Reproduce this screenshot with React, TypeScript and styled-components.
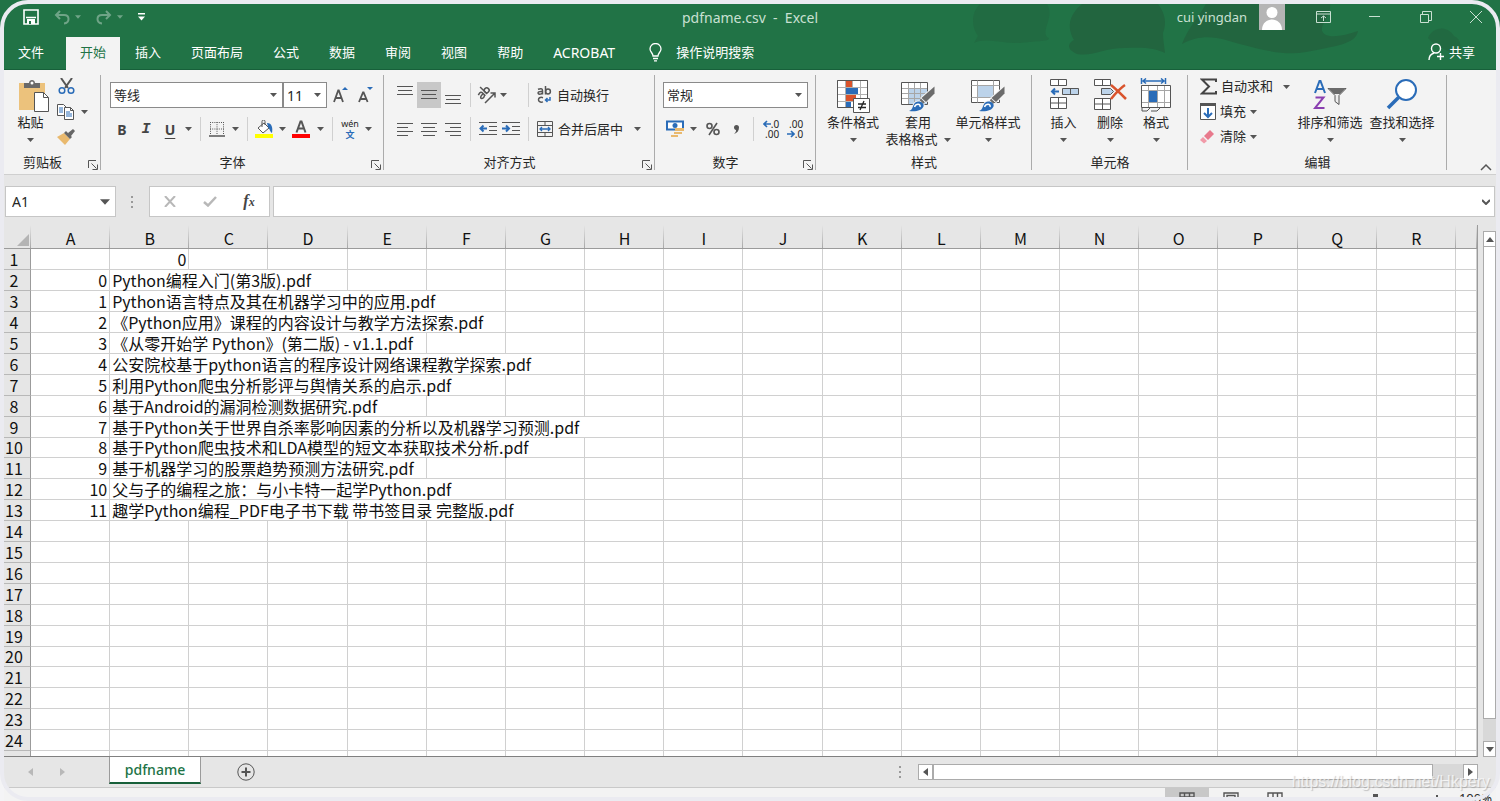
import React from 'react';
import styled, { createGlobalStyle, css } from 'styled-components';

const green = '#217346';
const ink = '#262626';
const grey = '#555555';
const blue = '#2a6cb8';
const face = '#f3f3f3';
const chrome = '#e6e6e6';

const GlobalStyle = createGlobalStyle`
  * { box-sizing: border-box; }
  body {
    margin: 0;
    font: 13px/17px "Noto Sans", "Noto Sans CJK SC", sans-serif;
    color: ${ink};
  }
  button, select, input { font: inherit; color: inherit; margin: 0; }
  svg { display: block; flex: none; }
`;

const Frame = styled.div`
  position: relative;
  display: flex;
  flex-direction: column;
  height: 100vh;
  min-width: 1460px;
  padding: 4px 4px 0;
  overflow: hidden;
  background: linear-gradient(${green} 50%, #f4f4f6 50%);

  &::after {
    content: "";
    position: absolute;
    inset: 0;
    border: 4px solid #ebebf1;
    border-radius: 28px;
    pointer-events: none;
  }
`;

const Plain = styled.button`
  display: flex;
  align-items: center;
  justify-content: center;
  flex: none;
  padding: 0;
  border: 0;
  background: none;
  white-space: nowrap;
`;

/* Title bar and tabs */

const Banner = styled.header`
  position: relative;
  flex: none;
  background: ${green};
  border-bottom: 1px solid #17603a;
  color: #ffffff;
`;

const Clouds = styled.svg`
  position: absolute;
  top: 0;
  right: 0;
`;

const TitleBar = styled.div`
  position: relative;
  display: grid;
  grid-template-columns: 1fr auto 1fr;
  height: 33px;
  padding-bottom: 7px;
  align-items: center;
`;

const QuickAccess = styled.div`
  display: flex;
  align-items: center;
  padding-left: 19px;
  gap: 15px;
`;

const QuickPair = styled.div`
  display: flex;
  align-items: center;
  gap: 5px;
  opacity: 0.35;
`;

const Title = styled.span`
  color: #c9e0d2;
  font-size: 14px;
  white-space: pre;
`;

const WindowTools = styled.div`
  display: flex;
  align-items: center;
  justify-content: flex-end;
  color: #c9e0d2;
`;

const Avatar = styled.svg`
  margin: 0 13px 0 12px;
`;

const WindowButton = styled(Plain)<{ $last?: boolean }>`
  width: ${p => (p.$last ? 40 : 51)}px;
  height: 26px;
  ${p => p.$last && css`margin-left: 5px;`}
`;

const TabRow = styled.nav`
  position: relative;
  display: flex;
  height: 32px;
`;

const Tab = styled(Plain)<{ $active?: boolean; $file?: boolean; $latin?: boolean }>`
  padding: 0 15px 2px;
  ${p => p.$file && css`padding: 0 22px 2px 14px;`}
  ${p => p.$active && css`padding: 0 14px 2px; background: ${face}; color: ${green}; height: 33px;`}
  ${p => p.$latin && css`font-size: 14px;`}
`;

const Tell = styled(Plain)`
  gap: 14px;
  padding: 0 0 2px 19px;
`;

const Share = styled(Plain)`
  gap: 4px;
  margin-left: auto;
  padding: 0 21px 2px 0;
`;

/* Ribbon */

const Ribbon = styled.section`
  display: flex;
  flex: none;
  height: 105px;
  background: ${face};
  border-bottom: 1px solid #cfcfcf;
`;

const Group = styled.div<{ $w: number }>`
  position: relative;
  display: flex;
  flex-direction: column;
  flex: none;
  width: ${p => p.$w}px;

  &::after {
    content: "";
    position: absolute;
    right: 0;
    top: 5px;
    bottom: 4px;
    width: 1px;
    background: #ababab;
  }
`;

const GroupBody = styled.div<{ $pad?: number }>`
  display: flex;
  height: 84px;
  padding-left: ${p => p.$pad ?? 0}px;
`;

const GroupName = styled.div<{ $plain?: boolean }>`
  display: flex;
  justify-content: center;
  height: 17px;
  padding-right: ${p => (p.$plain ? 0 : 20)}px;
`;

const Launcher = styled(Plain)`
  position: absolute;
  right: 3px;
  bottom: 4px;
  width: 11px;
  height: 11px;
`;

const Stack = styled.div<{ $top?: number; $gap?: number }>`
  display: flex;
  flex-direction: column;
  padding-top: ${p => p.$top ?? 12}px;
  gap: ${p => p.$gap ?? 8}px;
`;

const Row = styled.div`
  display: flex;
  align-items: center;
  height: 26px;
`;

const Tool = styled(Plain)<{ $w?: number; $on?: boolean; $h?: number }>`
  width: ${p => p.$w ?? 24}px;
  height: ${p => p.$h ?? 26}px;
  background: ${p => (p.$on ? '#c8c8c8' : 'none')};
`;

const Letter = styled.span<{ $kind: 'b' | 'i' | 'u' }>`
  font-size: 14px;
  font-weight: 700;
  color: #444444;
  ${p => p.$kind === 'i' && css`font-family: "Liberation Mono", monospace; font-style: italic; font-size: 15px;`}
  ${p => p.$kind === 'u' && css`text-decoration: underline; text-underline-offset: 3px;`}
`;

const Rule = styled.i<{ $before?: number }>`
  width: 1px;
  height: 24px;
  margin: 0 5px 0 ${p => p.$before ?? 5}px;
  background: #d0d0d0;
`;

const Caption = styled(Plain)<{ $gap?: number; $h?: number; $left?: number }>`
  gap: ${p => p.$gap ?? 5}px;
  height: ${p => p.$h ?? 26}px;
  margin-left: ${p => p.$left ?? 0}px;
  justify-content: flex-start;
`;

const Big = styled(Plain)<{ $w: number }>`
  flex-direction: column;
  justify-content: flex-start;
  width: ${p => p.$w}px;
  padding-top: 8px;
`;

const BigIcon = styled.span`
  display: flex;
  align-items: center;
  height: 36px;
`;

const BigLine = styled.span`
  display: flex;
  align-items: center;
  gap: 6px;
  height: 17px;
`;

const Picker = styled.label<{ $w: number; $h?: number; $tone?: string }>`
  display: grid;
  align-items: center;
  flex: none;
  width: ${p => p.$w}px;
  height: ${p => p.$h ?? 26}px;
  border: 1px solid ${p => p.$tone ?? '#8a8a8a'};
  background: #ffffff;

  > * { grid-area: 1 / 1; }
  > svg { justify-self: end; margin-right: 5px; pointer-events: none; }
`;

const Select = styled.select<{ $size?: number; $pad?: number }>`
  appearance: none;
  width: 100%;
  height: 100%;
  padding: 0 0 0 ${p => p.$pad ?? 3}px;
  border: 0;
  background: none;
  font-size: ${p => p.$size ?? 13}px;
`;

const Collapse = styled(Plain)`
  align-self: flex-end;
  margin: 0 4px 3px auto;
`;

/* Formula bar */

const FormulaBar = styled.div`
  display: flex;
  flex: none;
  align-items: flex-start;
  padding: 11px 1px 0;
  height: 50px;
  background: ${chrome};
`;

const Dots = styled.svg`
  margin: 9px 15px 0 14px;
`;

const FormulaButtons = styled.div`
  display: flex;
  width: 121px;
  height: 31px;
  margin-right: 3px;
  border: 1px solid #c6c6c6;
  background: #ffffff;
`;

const FormulaField = styled.div`
  display: flex;
  flex: 1;
  height: 31px;
  padding-right: 4px;
  border: 1px solid #c6c6c6;
  background: #ffffff;
`;

const FormulaInput = styled.input`
  flex: 1;
  border: 0;
  background: none;
`;

const Fx = styled.span`
  font: italic 700 16px/20px "Liberation Serif", serif;
  color: #444444;

  small { font-size: 12px; }
`;

/* Sheet */

const Workspace = styled.main`
  display: flex;
  flex: 1;
  min-height: 0;
  background: ${chrome};
`;

const SheetArea = styled.div`
  flex: 1;
  min-width: 0;
  overflow: hidden;
  border-right: 1px solid #9b9b9b;
  border-bottom: 1px solid #808080;
  background: #ffffff;
`;

const Sheet = styled.table`
  width: 100%;
  table-layout: fixed;
  border-collapse: separate;
  border-spacing: 0;
  font: 16px/20px "Noto Sans CJK SC", sans-serif;
  color: #111111;
`;

const HeadCol = styled.col`width: 27px;`;
const TailCol = styled.col`width: 21px;`;

const ColHead = styled.th`
  height: 24px;
  padding: 3px 0 0;
  border-bottom: 1px solid #9b9b9b;
  background: linear-gradient(${chrome}, #a8a8a8) right / 1px 100% no-repeat ${chrome};
  font-weight: 400;
`;

const Corner = styled(ColHead)`
  > svg { margin: 3px 0 0 auto; }
`;

const RowHead = styled.th`
  padding: 0 6px 0 0;
  border-right: 1px solid #9b9b9b;
  border-bottom: 1px solid #b8b8b8;
  background: ${chrome};
  font-weight: 400;
`;

const Line = styled.tr`
  height: 21px;
  &:nth-child(10n) { height: 20px; }
  &:nth-child(10n) > * { line-height: 19px; }
`;

const Cell = styled.td<{ $num?: boolean }>`
  padding: 0 2px;
  border-right: 1px solid #d0d0d0;
  border-bottom: 1px solid #d0d0d0;
  white-space: nowrap;
  text-align: ${p => (p.$num ? 'right' : 'left')};
`;

const VScroll = styled.div`
  display: flex;
  flex-direction: column;
  flex: none;
  width: 13px;
  margin: 6px 0 0 5px;
  background: #d8d8d8;
`;

const ScrollButton = styled(Plain)`
  width: 15px;
  height: 16px;
  border: 1px solid #ababab;
  background: #ffffff;
`;

const VButton = styled(ScrollButton)`
  width: 13px;
`;

const VThumb = styled.div`
  flex: 1;
  margin-bottom: 22px;
  border: 1px solid #ababab;
  border-top: 0;
  background: #ffffff;
`;

const BottomBar = styled.div`
  display: flex;
  flex: none;
  height: 30px;
  background: ${chrome};
`;

const SheetNav = styled.div`
  display: flex;
  align-items: center;
  gap: 27px;
  width: 105px;
  padding-left: 24px;
`;

const SheetTab = styled(Plain)`
  width: 92px;
  height: 27px;
  border: 1px solid #9b9b9b;
  border-top: 0;
  border-bottom: 2px solid #17603a;
  background: #ffffff;
  color: ${green};
  font-weight: 500;
  font-size: 14px;
`;

const AddSheet = styled(Plain)`
  margin-left: 36px;
`;

const HScroll = styled.div`
  display: flex;
  align-items: center;
  width: 40%;
  margin-left: auto;
  padding-right: 18px;
`;

const HTrack = styled.div`
  flex: 1;
  height: 16px;
  padding-right: 30px;
  background: #d8d8d8;
`;

const HThumb = styled.div`
  height: 16px;
  border: 1px solid #ababab;
  background: #ffffff;
`;

const HDots = styled.svg`
  margin-right: 16px;
`;

const StatusBar = styled.footer`
  display: flex;
  flex: none;
  justify-content: flex-end;
  align-items: flex-start;
  height: 14px;
  overflow: hidden;
  border-top: 1px solid #c9c9c9;
  background: ${face};
`;

const ViewButton = styled(Plain)<{ $on?: boolean }>`
  width: 44px;
  height: 14px;
  padding-top: 4px;
  align-items: flex-start;
  background: ${p => (p.$on ? '#c8c8c8' : 'none')};
`;

const ZoomSlider = styled.svg`
  margin: 6px 14px 0 76px;
`;

const ZoomLevel = styled.span`
  flex: none;
  padding-top: 2px;
  margin-right: 4px;
`;

const Watermark = styled.span`
  position: absolute;
  right: 10px;
  bottom: 9px;
  font: 16px/20px "Liberation Sans", sans-serif;
  color: rgba(255, 255, 255, 0.7);
  text-shadow: 1px 1px 1px rgba(120, 120, 120, 0.4);
`;

/* Icons */

const Arrow = ({ wide }: { wide?: boolean }) => (
  <svg width={wide ? 10 : 7} height={wide ? 6 : 4} viewBox="0 0 7 4" fill={grey}><path d="M0 0h7L3.5 4z" /></svg>
);

const LaunchIcon = () => (
  <svg width="10" height="10" viewBox="0 0 10 10" fill="none" stroke={grey}><path d="M.5 8V.5H8M3.500 3.500l5 5M9.500 4.500v5h-5" /></svg>
);

const SaveIcon = () => (
  <svg width="16" height="16" viewBox="0 0 16 16" fill="none" stroke="#fff" strokeWidth="1.600"><path d="M1 1h14v14H1zM3 8.500h10" /><path d="M4 10h8v5H4z" fill="#fff" stroke="none" /><path d="M6 12h2v3H6z" fill={green} stroke="none" /></svg>
);

const UndoIcon = ({ flip }: { flip?: boolean }) => (
  <svg width="16" height="15" viewBox="0 0 16 15" fill="none" stroke="#fff" strokeWidth="2">
    {flip ? <path d="M10 1l4 4-4 4M14 5H6C0 5 0 13 6 13.500" /> : <path d="M6 1L2 5l4 4M2 5h8c6 0 6 8 0 8.500" />}
  </svg>
);

const PasteIcon = () => (
  <svg width="38" height="34" viewBox="-6 0 38 34">
    <path d="M1 4h26v27H1z" fill="#ecc27c" />
    <path d="M6 9V4h5c0-4 6-4 6 0h5v5z" fill="#696969" /><circle cx="14" cy="4" r="1.500" fill="#fff" />
    <path d="M16.500 13.500h9l5 5v14h-14z" fill="#fff" stroke={grey} /><path d="M25.500 13.500v5h5" fill="none" stroke={grey} />
  </svg>
);

const CutIcon = () => (
  <svg width="17" height="17" viewBox="0 0 17 17" fill="none"><path d="M3 0l7 10M14 0L7 10" stroke={grey} strokeWidth="2" /><circle cx="4" cy="12.500" r="2.800" stroke={blue} strokeWidth="1.500" /><circle cx="13" cy="12.500" r="2.800" stroke={blue} strokeWidth="1.500" /></svg>
);

const CopyIcon = () => (
  <svg width="18" height="16" viewBox="0 0 18 16" fill="#fff" stroke={grey}><path d="M.5.5h6l3 3v8h-9z" /><path d="M7.500 3.500h6l3 3v9h-9z" /><path d="M13.500 3.500v3h3" fill="none" /><path d="M2 4h4M2 6h4M2 8h4M9 8h4M9 10h6M9 12h6" stroke={blue} /></svg>
);

const PainterIcon = () => (
  <svg width="18" height="16" viewBox="0 0 18 16"><path d="M7 4l6 6-5 6-8-8z" fill="#e9b96e" /><path d="M7 4l2-2 6 6-2 2zM11 4l5-4 2 2-4 5z" fill="#666" /></svg>
);

const GrowIcon = ({ down }: { down?: boolean }) => (
  <svg width="18" height="20" viewBox="0 0 18 20" fill="none">
    {down
      ? <><path d="M3 17L7 7.500h.6l4 9.500M4.500 14h6" stroke={grey} strokeWidth="1.800" /><path d="M11 2h6l-3 3z" fill={blue} /></>
      : <><path d="M3 17L7.200 5.500h.6l4.200 11.500M4.500 13h6" stroke={grey} strokeWidth="1.800" /><path d="M11 5h6l-3-3z" fill={blue} /></>}
  </svg>
);

const BorderIcon = () => (
  <svg width="16" height="16" viewBox="0 0 16 16" fill="none" stroke={grey}><path d="M1 1.500h14M1.500 1v13M14.500 1v13M8 1v13M1 8h14" strokeDasharray="1 1.200" /><path d="M0 15h16" strokeWidth="1.500" /></svg>
);

const FillIcon = () => (
  <svg width="18" height="18" viewBox="0 0 18 18"><path d="M3 8l6-5 5 5-6 5z" fill="#fff" stroke={grey} /><path d="M7 7V1.500a1.500 1.500 0 013 0V5" fill="none" stroke={grey} /><path d="M12 3c5 0 6 5 5 10-2-1-2-4-4-6z" fill={blue} /><path d="M0 14h18v4H0z" fill="#ffff00" /></svg>
);

const FontColorIcon = () => (
  <svg width="18" height="18" viewBox="0 0 18 18" fill="none"><path d="M4.500 12.500L8.500 1.500h1l4 11M6 8.500h6" stroke={grey} strokeWidth="2" /><path d="M0 14h18v4H0z" fill="#ff0000" /></svg>
);

const Phonetic = styled.span`
  display: flex;
  flex-direction: column;
  align-items: center;
  font-size: 9px;
  line-height: 11px;

  b { color: ${blue}; font-size: 9px; }
`;

const linesAt = (rows: number[][], w = 17, h = 26) => (
  <svg width={w} height={h} viewBox={`0 0 ${w} ${h}`} stroke={grey}>
    {rows.map(([x, y, l], i) => <path key={i} d={`M${x} ${y}.5h${l}`} />)}
  </svg>
);

const OrientIcon = () => (
  <svg width="20" height="18" viewBox="0 0 20 18" fill="none" stroke={grey} strokeWidth="1.500">
    <g transform="rotate(-45 7 7)"><path d="M1.500 4.500c4-1.500 4.500 0 4.500 1.500v4M6 7C2 6.500.5 8 1.500 9.300S5 10 6 8.500" /><path d="M8.500 0v10" /><circle cx="10.800" cy="7" r="2.400" /></g>
    <path d="M8 17L17.500 7.500M13.500 7h4.500v4.500" />
  </svg>
);

const IndentIcon = ({ right }: { right?: boolean }) => (
  <svg width="19" height="16" viewBox="0 0 19 16" fill="none" stroke={grey}><path d="M0 1.500h18M10 5.500h8M10 9.500h8M0 13.500h18" /><path d={right ? 'M0 7.500h7M4 4.500l3 3-3 3' : 'M8 7.500H2M4.500 4.500l-3 3 3 3'} stroke={blue} strokeWidth="2" /></svg>
);

const WrapIcon = () => (
  <svg width="15" height="18" viewBox="0 0 15 18" fill="none" stroke={grey} strokeWidth="1.500">
    <path d="M1 3.300c4-1.500 4.500 0 4.500 1.500v3.700M5.500 5.500C2 5.200.5 6.200 1.300 7.500S4.700 8 5.500 7M8.500 0v8.500" /><circle cx="11" cy="5.500" r="2.400" />
    <path d="M6 11.700c-6-2-6 6 0 4.200" /><path d="M13 11v3H9M10.500 12L8.500 14l2 2" stroke={blue} />
  </svg>
);

const MergeIcon = () => (
  <svg width="16" height="16" viewBox="0 0 16 16" fill="none" stroke={grey}><path d="M.5.5h15v15H.5zM0 4.500h16M0 11.500h16M8 0v4M8 12v4" /><path d="M3 8h10M5 6L3 8l2 2M11 6l2 2-2 2" stroke={blue} strokeWidth="1.300" /></svg>
);

const CurrencyIcon = () => (
  <svg width="18" height="18" viewBox="0 0 18 18"><path d="M1 1.500h16v8H1z" fill="#fff" stroke={blue} strokeWidth="2" /><circle cx="9" cy="5.500" r="2.500" fill={blue} /><path d="M9 8h9v3H9zM8 12h8v2H8zM5 15h7v2H5z" fill="#e9b96e" /></svg>
);

const Decimal = styled.span`
  display: flex;
  flex-direction: column;
  align-items: flex-end;
  font: 10px/10px "Noto Sans", sans-serif;

  span { display: flex; align-items: center; }
`;

const BlueArrow = ({ right }: { right?: boolean }) => (
  <svg width="8" height="8" viewBox="0 0 8 8" fill="none" stroke={blue} strokeWidth="1.600"><path d={right ? 'M0 4h7M4 1l3 3-3 3' : 'M8 4H1M4 1L1 4l3 3'} /></svg>
);

const CondIcon = () => (
  <svg width="34" height="34" viewBox="0 0 34 34" stroke="#8c8c8c" fill="none">
    <path d="M1.500 1.500h30v27h-30z" fill="#fff" />
    <g stroke="none"><path d="M10 2h6v6h-6zM10 16h10v6H10z" fill="#d9532c" /><path d="M10 9h12v6H10zM10 22h5v6h-5z" fill={blue} /></g>
    <path d="M1.500 8.500h30M1.500 15.500h30M1.500 22.500h30M9.500 1.500v27M16.500 1.500v7M24.500 1.500v27" stroke="#b0b0b0" /><path d="M1.500 1.500h30v27h-30z" stroke={grey} />
    <path d="M17.500 19.500h16v14h-16z" fill="#fff" stroke={grey} /><path d="M22 25h8M22 28.500h8M28 22l-4 9" stroke={ink} strokeWidth="1.300" />
  </svg>
);

const Brush = () => (
  <>
    <path d="M33.500 7.500v7L25 23l-4.500-4z" fill="#6b6b6b" stroke={face} strokeWidth="2" paintOrder="stroke" />
    <path d="M8 32c5-1 3-9 9-9.500 3.500-.3 6.500 2 5.500 5C21 31.500 15 33 8 32z" fill={blue} stroke={face} strokeWidth="2" paintOrder="stroke" />
    <path d="M13.500 28c1.500-4 6.500-3.500 5.500 0" stroke="#fff" strokeWidth="1.500" fill="none" />
    <path d="M19.500 20.500l3.500 3.500" stroke="#6b6b6b" strokeWidth="2" />
  </>
);

const TableStyleIcon = () => (
  <svg width="34" height="34" viewBox="0 0 34 34" fill="none">
    <path d="M.5 3.500h26v22H.5z" fill="#fff" /><path d="M8 9h18v16H8z" fill="#bcd3ea" />
    <path d="M.5 9.500h26M.5 14.500h26M.5 19.500h26M7.500 3.500v22M13.500 3.500v22M19.500 3.500v22" stroke="#a6a6a6" /><path d="M.5 3.500h26v22H.5z" stroke={grey} />
    <Brush />
  </svg>
);

const CellStyleIcon = () => (
  <svg width="34" height="34" viewBox="0 0 34 34" fill="none">
    <path d="M.5 1.500h28v22H.5z" fill="#fff" stroke={grey} /><path d="M.5 6.500h28M.5 18.500h28M6.500 1.500v22M22.500 1.500v22" stroke="#a6a6a6" /><path d="M7 7h15v11H7z" fill="#bcd3ea" />
    <Brush />
  </svg>
);

const InsertIcon = () => (
  <svg width="30" height="34" viewBox="0 0 30 34" fill="#fff" stroke={grey}><path d="M1.500.5h16v6h-16zM9.500.5v6M1.500 18.500h16v11h-16zM9.500 18.500v11M1.500 24h16" /><path d="M13.500 9.500h16v6h-16zM21.500 9.500v6" fill="#bcd3ea" /><path d="M10 12.500H3M6 9.500l-3 3 3 3" stroke={blue} strokeWidth="2" fill="none" /></svg>
);

const DeleteIcon = () => (
  <svg width="34" height="34" viewBox="0 0 34 34" fill="#fff" stroke={grey}><path d="M1.500.5h16v6h-16zM9.500.5v6M1.500 19.500h16v11h-16zM9.500 19.500v11M1.500 25h16" /><path d="M8.500 9.500h9l3 3-3 3h-9z" fill="#bcd3ea" /><path d="M18 6c5 4 10 9 15 14M32 6c-6 4-10 9-14 14" stroke="#d9532c" strokeWidth="2.500" fill="none" /></svg>
);

const FormatIcon = () => (
  <svg width="32" height="36" viewBox="0 0 32 36" fill="none"><path d="M1.500 0v6M25.500 0v6M3 3h21M6 .5L3 3l3 2.500M21 .5L24 3l-3 2.500" stroke={blue} strokeWidth="1.500" /><path d="M1.500 7.500h29v22h-29z" fill="#fff" /><path d="M1.500 12.500h29M1.500 24.500h29M8.500 7.500v22M17.500 7.500v22M24.500 7.500v22" stroke="#a6a6a6" /><path d="M9 13h8v11H9z" fill={blue} /><path d="M1.500 7.500h29v22h-29zM2 30v3h5l3-3M11 33h6l3-3" stroke={grey} /></svg>
);

const SumIcon = () => (
  <svg width="17" height="17" viewBox="0 0 17 17" fill="none" stroke="#444" strokeWidth="2"><path d="M16 4V1.500H2L9 8.500 2 15.500h14V13" /></svg>
);

const FillDownIcon = () => (
  <svg width="16" height="17" viewBox="0 0 16 17" fill="#fff" stroke={grey}><path d="M.5.5h15v16H.5z" /><path d="M0 1.500h16" strokeWidth="3" /><path d="M8 5v9M4 10l4 4 4-4" stroke={blue} strokeWidth="2" fill="none" /></svg>
);

const EraserIcon = () => (
  <svg width="16" height="14" viewBox="0 0 16 14"><path d="M10 0l4 4-6 6-4-4z" fill="#e8798c" /><path d="M3 7l4 4-3 2.500L0 10z" fill="#f19aa8" /></svg>
);

const SortIcon = () => (
  <svg width="34" height="34" viewBox="0 0 34 34" fill="none"><path d="M2 14L6.500 2h1L12 14M3.500 10h7" stroke={blue} strokeWidth="2" /><path d="M2.500 18.500h8L2 29h9.500" stroke="#8a3fb0" strokeWidth="2" /><path d="M15 9.500h18l-7 7v9l-4-3v-6z" fill="#eee" stroke={grey} /><path d="M15 9h18l-6 6h-6z" fill="#6b6b6b" /></svg>
);

const FindIcon = () => (
  <svg width="32" height="34" viewBox="0 0 32 34" fill="none" stroke={blue}><circle cx="20" cy="11" r="10" fill="#fff" strokeWidth="2" /><path d="M12.500 18.500L2 29" strokeWidth="3.500" /></svg>
);

/* Data */

const tabs = ['插入', '页面布局', '公式', '数据', '审阅', '视图', '帮助', 'ACROBAT'];
const columns = 'ABCDEFGHIJKLMNOPQR'.split('');

const files: { name: string; span: number }[] = [
  { name: 'Python编程入门(第3版).pdf', span: 3 },
  { name: 'Python语言特点及其在机器学习中的应用.pdf', span: 5 },
  { name: '《Python应用》课程的内容设计与教学方法探索.pdf', span: 5 },
  { name: '《从零开始学 Python》(第二版) - v1.1.pdf', span: 4 },
  { name: '公安院校基于python语言的程序设计网络课程教学探索.pdf', span: 6 },
  { name: '利用Python爬虫分析影评与舆情关系的启示.pdf', span: 5 },
  { name: '基于Android的漏洞检测数据研究.pdf', span: 4 },
  { name: '基于Python关于世界自杀率影响因素的分析以及机器学习预测.pdf', span: 7 },
  { name: '基于Python爬虫技术和LDA模型的短文本获取技术分析.pdf', span: 6 },
  { name: '基于机器学习的股票趋势预测方法研究.pdf', span: 4 },
  { name: '父与子的编程之旅：与小卡特一起学Python.pdf', span: 5 },
  { name: '趣学Python编程_PDF电子书下载 带书签目录 完整版.pdf', span: 6 },
];

const SheetRow = ({ n }: { n: number }) => {
  const file = files[n - 2];
  const used = file ? file.span + 1 : n === 1 ? 2 : 0;
  return (
    <Line>
      <RowHead scope="row">{n}</RowHead>
      {n === 1 && <><Cell /><Cell $num>0</Cell></>}
      {file && <><Cell $num>{n - 2}</Cell><Cell colSpan={file.span}>{file.name}</Cell></>}
      {Array.from({ length: columns.length + 1 - used }, (_, i) => <Cell key={i} />)}
    </Line>
  );
};

const BigButton = ({ w, icon, label, second }: { w: number; icon: React.ReactNode; label: string; second?: string }) => (
  <Big $w={w}>
    <BigIcon>{icon}</BigIcon>
    <BigLine>{label}</BigLine>
    <BigLine>{second}<Arrow /></BigLine>
  </Big>
);

const Drop = ({ label, w = 13 }: { label: string; w?: number }) => <Tool $w={w} aria-label={label}><Arrow /></Tool>;

export default function App() {
  return (
    <>
      <GlobalStyle />
      <Frame>
        <Banner>
          <Clouds width="530" height="60" viewBox="0 0 530 60" fill="#22653f" aria-hidden="true">
            <path d="M14 0C4 10 6 24 12 32L8 39c12-6 30 1 45 0 18-2 36-2 28-6-6-8 8-20 0-33z" opacity=".6" />
            <path d="M116 0c-12 10-16 22-8 36-6 3-8 9 3 14 16 3 26-6 48-6 20-1 30 0 40 5-1-8-2-14-2-20 4-10 2-20-5-29z" />
            <path d="M240 0c-8 14-18 24-24 40 16-8 28-8 44-4 34 10 58 16 80 12 30-6 50-8 52-21-12 4-24 7-32 4-12-7 6-16 4-31z" />
            <path d="M462 34c4-10 18-14 26-2 8 3 8 14 4 22-10-10-20-8-30-20z" opacity=".7" />
          </Clouds>
          <TitleBar>
            <QuickAccess>
              <Plain aria-label="保存"><SaveIcon /></Plain>
              <QuickPair>
                <Plain aria-label="撤消"><UndoIcon /></Plain>
                <svg width="6" height="4" viewBox="0 0 7 4" fill="#fff"><path d="M0 0h7L3.500 4z" /></svg>
              </QuickPair>
              <QuickPair>
                <Plain aria-label="恢复"><UndoIcon flip /></Plain>
                <svg width="6" height="4" viewBox="0 0 7 4" fill="#fff"><path d="M0 0h7L3.500 4z" /></svg>
              </QuickPair>
              <Plain aria-label="自定义快速访问工具栏"><svg width="7" height="8" viewBox="0 0 7 8" fill="#fff"><path d="M0 0h7v1.500H0zM0 3.500h7L3.500 7.500z" /></svg></Plain>
            </QuickAccess>
            <Title>{'pdfname.csv  -  Excel'}</Title>
            <WindowTools>
              <span>cui yingdan</span>
              <Avatar width="26" height="26" viewBox="0 0 26 26"><path d="M0 0h26v26H0z" fill="#b5b5b5" /><circle cx="13" cy="8.500" r="5.500" fill="#fff" /><path d="M3 26c0-14 20-14 20 0z" fill="#fff" /></Avatar>
              <WindowButton aria-label="功能区显示选项"><svg width="15" height="12" viewBox="0 0 15 12" fill="none" stroke="currentColor"><path d="M.5.5h14v11H.5zM0 3h15M7.500 10V5M5 7l2.500-2L10 7" /></svg></WindowButton>
              <WindowButton aria-label="最小化"><svg width="11" height="2" fill="currentColor"><path d="M0 0h11v1H0z" /></svg></WindowButton>
              <WindowButton aria-label="还原"><svg width="12" height="12" viewBox="0 0 12 12" fill="none" stroke="currentColor"><path d="M.5 3.500h8v8h-8zM2.500 3V.5h9v9H9" /></svg></WindowButton>
              <WindowButton $last aria-label="关闭"><svg width="12" height="12" viewBox="0 0 12 12" stroke="currentColor"><path d="M0 0l12 12M12 0L0 12" /></svg></WindowButton>
            </WindowTools>
          </TitleBar>
          <TabRow>
            <Tab $file>文件</Tab>
            <Tab $active>开始</Tab>
            {tabs.map(t => <Tab key={t} $latin={t === 'ACROBAT'}>{t}</Tab>)}
            <Tell>
              <svg width="13" height="19" viewBox="0 0 13 19" fill="none" stroke="#fff" strokeWidth="1.300"><path d="M4 13c0-3-3-4-3-7a5.500 5.500 0 0111 0c0 3-3 4-3 7zM4 15.500h5M5 17.800h3" /></svg>
              操作说明搜索
            </Tell>
            <Share>
              <svg width="17" height="18" viewBox="0 0 17 18" fill="none" stroke="#fff" strokeWidth="1.400"><circle cx="8" cy="5.500" r="4.500" /><path d="M1 17c0-4 2-6 5-7M12.500 10v7M9 13.500h7" /></svg>
              共享
            </Share>
          </TabRow>
        </Banner>

        <Ribbon>
          <Group $w={97}>
            <GroupBody>
              <BigButton w={53} icon={<PasteIcon />} label="粘贴" />
              <Stack $top={4} $gap={0}>
                <Tool $w={18} $h={25} aria-label="剪切"><CutIcon /></Tool>
                <Caption $gap={6} $h={25} aria-label="复制"><CopyIcon /><Arrow /></Caption>
                <Tool $w={18} $h={25} aria-label="格式刷"><PainterIcon /></Tool>
              </Stack>
            </GroupBody>
            <GroupName>剪贴板</GroupName>
            <Launcher aria-label="剪贴板设置"><LaunchIcon /></Launcher>
          </Group>

          <Group $w={283}>
            <GroupBody $pad={9}>
              <Stack>
                <Row>
                  <Picker $w={173}><Select aria-label="字体"><option>等线</option></Select><Arrow /></Picker>
                  <Picker $w={44}><Select aria-label="字号" $size={14}><option>11</option></Select><Arrow /></Picker>
                  <Tool $w={26} aria-label="增大字号"><GrowIcon /></Tool>
                  <Tool aria-label="减小字号"><GrowIcon down /></Tool>
                </Row>
                <Row>
                  <Tool aria-label="加粗"><Letter $kind="b">B</Letter></Tool>
                  <Tool aria-label="倾斜"><Letter $kind="i">I</Letter></Tool>
                  <Tool aria-label="下划线"><Letter $kind="u">U</Letter></Tool>
                  <Drop label="下划线样式" />
                  <Rule />
                  <Tool $w={22} aria-label="边框"><BorderIcon /></Tool>
                  <Drop label="边框样式" w={14} />
                  <Rule />
                  <Tool $w={22} aria-label="填充颜色"><FillIcon /></Tool>
                  <Drop label="选择填充颜色" w={14} />
                  <Tool aria-label="字体颜色"><FontColorIcon /></Tool>
                  <Drop label="选择字体颜色" w={14} />
                  <Rule />
                  <Tool aria-label="拼音"><Phonetic>wén<b>文</b></Phonetic></Tool>
                  <Drop label="拼音选项" />
                </Row>
              </Stack>
            </GroupBody>
            <GroupName>字体</GroupName>
            <Launcher aria-label="字体设置"><LaunchIcon /></Launcher>
          </Group>

          <Group $w={271}>
            <GroupBody $pad={9}>
              <Stack>
                <Row>
                  <Tool aria-label="顶端对齐">{linesAt([[0, 4, 16], [1, 8, 14], [0, 12, 16]])}</Tool>
                  <Tool $on aria-label="垂直居中">{linesAt([[0, 8, 16], [1, 12, 14], [0, 16, 16]])}</Tool>
                  <Tool aria-label="底端对齐">{linesAt([[0, 13, 16], [1, 17, 14], [0, 21, 16]])}</Tool>
                  <Rule />
                  <Tool $w={22} aria-label="方向"><OrientIcon /></Tool>
                  <Drop label="方向选项" w={11} />
                  <Rule $before={19} />
                  <Caption $left={3}><WrapIcon />自动换行</Caption>
                </Row>
                <Row>
                  <Tool aria-label="左对齐">{linesAt([[0, 7, 16], [0, 11, 11], [0, 15, 16], [0, 19, 11]])}</Tool>
                  <Tool aria-label="居中">{linesAt([[0, 7, 16], [2, 11, 12], [0, 15, 16], [2, 19, 12]])}</Tool>
                  <Tool aria-label="右对齐">{linesAt([[0, 7, 16], [5, 11, 11], [0, 15, 16], [5, 19, 11]])}</Tool>
                  <Rule />
                  <Tool aria-label="减少缩进量"><IndentIcon /></Tool>
                  <Tool $w={23} aria-label="增加缩进量"><IndentIcon right /></Tool>
                  <Rule />
                  <Caption $left={3}><MergeIcon />合并后居中</Caption>
                  <Drop label="合并选项" w={29} />
                </Row>
              </Stack>
            </GroupBody>
            <GroupName>对齐方式</GroupName>
            <Launcher aria-label="对齐设置"><LaunchIcon /></Launcher>
          </Group>

          <Group $w={161}>
            <GroupBody $pad={8}>
              <Stack>
                <Picker $w={145}><Select aria-label="数字格式"><option>常规</option></Select><Arrow /></Picker>
                <Row>
                  <Tool aria-label="会计数字格式"><CurrencyIcon /></Tool>
                  <Drop label="货币选项" />
                  <Tool $w={26} aria-label="百分比样式"><svg width="14" height="14" viewBox="0 0 14 14" fill="none" stroke={grey} strokeWidth="1.600"><circle cx="3.500" cy="4" r="2.500" /><circle cx="10.500" cy="10" r="2.500" /><path d="M11 1L3 13" /></svg></Tool>
                  <Tool $w={22} aria-label="千位分隔样式"><svg width="6" height="9" viewBox="0 0 6 9" fill={grey}><path d="M0 2.500a2.500 2.500 0 015 0C5 6 3 8 0 9c2-2 2-3 2-4-1 0-2-1-2-2.500z" /></svg></Tool>
                  <Rule />
                  <Tool aria-label="增加小数位数"><Decimal><span><BlueArrow />.0</span><span>.00</span></Decimal></Tool>
                  <Tool aria-label="减少小数位数"><Decimal><span>.00</span><span><BlueArrow right />.0</span></Decimal></Tool>
                </Row>
              </Stack>
            </GroupBody>
            <GroupName>数字</GroupName>
            <Launcher aria-label="数字设置"><LaunchIcon /></Launcher>
          </Group>

          <Group $w={216}>
            <GroupBody $pad={6}>
              <BigButton w={62} icon={<CondIcon />} label="条件格式" />
              <BigButton w={68} icon={<TableStyleIcon />} label="套用" second="表格格式" />
              <BigButton w={72} icon={<CellStyleIcon />} label="单元格样式" />
            </GroupBody>
            <GroupName $plain>样式</GroupName>
          </Group>

          <Group $w={156}>
            <GroupBody $pad={8}>
              <BigButton w={47} icon={<InsertIcon />} label="插入" />
              <BigButton w={46} icon={<DeleteIcon />} label="删除" />
              <BigButton w={46} icon={<FormatIcon />} label="格式" />
            </GroupBody>
            <GroupName $plain>单元格</GroupName>
          </Group>

          <Group $w={259}>
            <GroupBody $pad={12}>
              <Stack $top={4} $gap={0}>
                <Caption $gap={4} $h={25}><SumIcon />自动求和<Drop label="求和选项" w={18} /></Caption>
                <Caption $gap={4} $h={25}><FillDownIcon />填充<Arrow /></Caption>
                <Caption $gap={4} $h={25}><EraserIcon />清除<Arrow /></Caption>
              </Stack>
              <BigButton w={70} icon={<SortIcon />} label="排序和筛选" />
              <BigButton w={74} icon={<FindIcon />} label="查找和选择" />
            </GroupBody>
            <GroupName $plain>编辑</GroupName>
          </Group>

          <Collapse aria-label="折叠功能区"><svg width="12" height="8" viewBox="0 0 12 8" fill="none" stroke={grey} strokeWidth="1.500"><path d="M1 7l5-5 5 5" /></svg></Collapse>
        </Ribbon>

        <FormulaBar>
          <Picker $w={111} $h={31} $tone="#c6c6c6"><Select aria-label="名称框" $pad={6} $size={14}><option>A1</option></Select><Arrow wide /></Picker>
          <Dots width="4" height="14" fill="#999"><path d="M1 1h2v2H1zM1 6h2v2H1zM1 11h2v2H1z" /></Dots>
          <FormulaButtons>
            <Tool $w={40} $h={29} aria-label="取消"><svg width="12" height="11" viewBox="0 0 12 11" stroke="#b8b8b8" strokeWidth="2"><path d="M1 0l10 11M11 0L1 11" /></svg></Tool>
            <Tool $w={39} $h={29} aria-label="输入"><svg width="14" height="11" viewBox="0 0 14 11" fill="none" stroke="#b8b8b8" strokeWidth="2.500"><path d="M1 6l4 3.500L13 1" /></svg></Tool>
            <Tool $w={40} $h={29} aria-label="插入函数"><Fx>f<small>x</small></Fx></Tool>
          </FormulaButtons>
          <FormulaField>
            <FormulaInput aria-label="编辑栏" />
            <Plain aria-label="展开编辑栏"><svg width="8" height="6" viewBox="0 0 8 6" fill="none" stroke={grey} strokeWidth="2"><path d="M0 1l4 4 4-4" /></svg></Plain>
          </FormulaField>
        </FormulaBar>

        <Workspace>
          <SheetArea>
            <Sheet>
              <colgroup>
                <HeadCol />
                {columns.map(c => <col key={c} />)}
                <TailCol />
              </colgroup>
              <thead>
                <tr>
                  <Corner as="td"><svg width="14" height="12" viewBox="0 0 14 12" fill="#b4b4b4"><path d="M12 0v12H0z" /></svg></Corner>
                  {columns.map(c => <ColHead key={c} scope="col">{c}</ColHead>)}
                  <ColHead as="td" />
                </tr>
              </thead>
              <tbody>
                {Array.from({ length: 25 }, (_, i) => <SheetRow key={i} n={i + 1} />)}
              </tbody>
            </Sheet>
          </SheetArea>
          <VScroll>
            <VButton aria-label="向上滚动"><svg width="8" height="5" viewBox="0 0 8 5" fill={grey}><path d="M0 5h8L4 0z" /></svg></VButton>
            <VThumb />
            <VButton aria-label="向下滚动"><svg width="8" height="5" viewBox="0 0 8 5" fill={grey}><path d="M0 0h8L4 5z" /></svg></VButton>
          </VScroll>
        </Workspace>

        <BottomBar>
          <SheetNav>
            <Plain aria-label="上一张工作表"><svg width="5" height="8" fill="#b8b8b8"><path d="M5 0v8L0 4z" /></svg></Plain>
            <Plain aria-label="下一张工作表"><svg width="5" height="8" fill="#b8b8b8"><path d="M0 0v8l5-4z" /></svg></Plain>
          </SheetNav>
          <SheetTab>pdfname</SheetTab>
          <AddSheet aria-label="新工作表"><svg width="18" height="18" viewBox="0 0 18 18" fill="none" stroke={grey}><circle cx="9" cy="9" r="8.200" /><path d="M9 4.500v9M4.500 9h9" strokeWidth="2" /></svg></AddSheet>
          <HScroll>
            <HDots width="3" height="12" fill="#999"><path d="M0 0h2v2H0zM0 5h2v2H0zM0 10h2v2H0z" /></HDots>
            <ScrollButton aria-label="向左滚动"><svg width="5" height="8" fill={grey}><path d="M5 0v8L0 4z" /></svg></ScrollButton>
            <HTrack><HThumb /></HTrack>
            <ScrollButton aria-label="向右滚动"><svg width="5" height="8" fill={grey}><path d="M0 0v8l5-4z" /></svg></ScrollButton>
          </HScroll>
        </BottomBar>

        <StatusBar>
          <ViewButton $on aria-label="普通"><svg width="16" height="12" viewBox="0 0 16 12" fill="none" stroke={grey} strokeWidth="1.400"><path d="M1 1h14v11H1zM1 5h14M1 9h14M5.500 1v11M10.500 1v11" /></svg></ViewButton>
          <ViewButton aria-label="页面布局"><svg width="16" height="12" viewBox="0 0 16 12" fill="none" stroke={grey} strokeWidth="1.400"><path d="M1 1h14v11H1zM4 3.500h8V12H4zM6 6.500h4" /></svg></ViewButton>
          <ViewButton aria-label="分页预览"><svg width="16" height="12" viewBox="0 0 16 12" fill="none" stroke={grey} strokeWidth="1.400"><path d="M1 12V1h14v11M6 1v7M10.500 1v7M1 8h14" /></svg></ViewButton>
          <ZoomSlider width="72" height="8" fill={grey}><path d="M0 0h5v8H0zM63 1h2v6h-2z" /></ZoomSlider>
          <ZoomLevel>100%</ZoomLevel>
        </StatusBar>
        <Watermark>https://blog.csdn.net/Hkpery</Watermark>
      </Frame>
    </>
  );
}
